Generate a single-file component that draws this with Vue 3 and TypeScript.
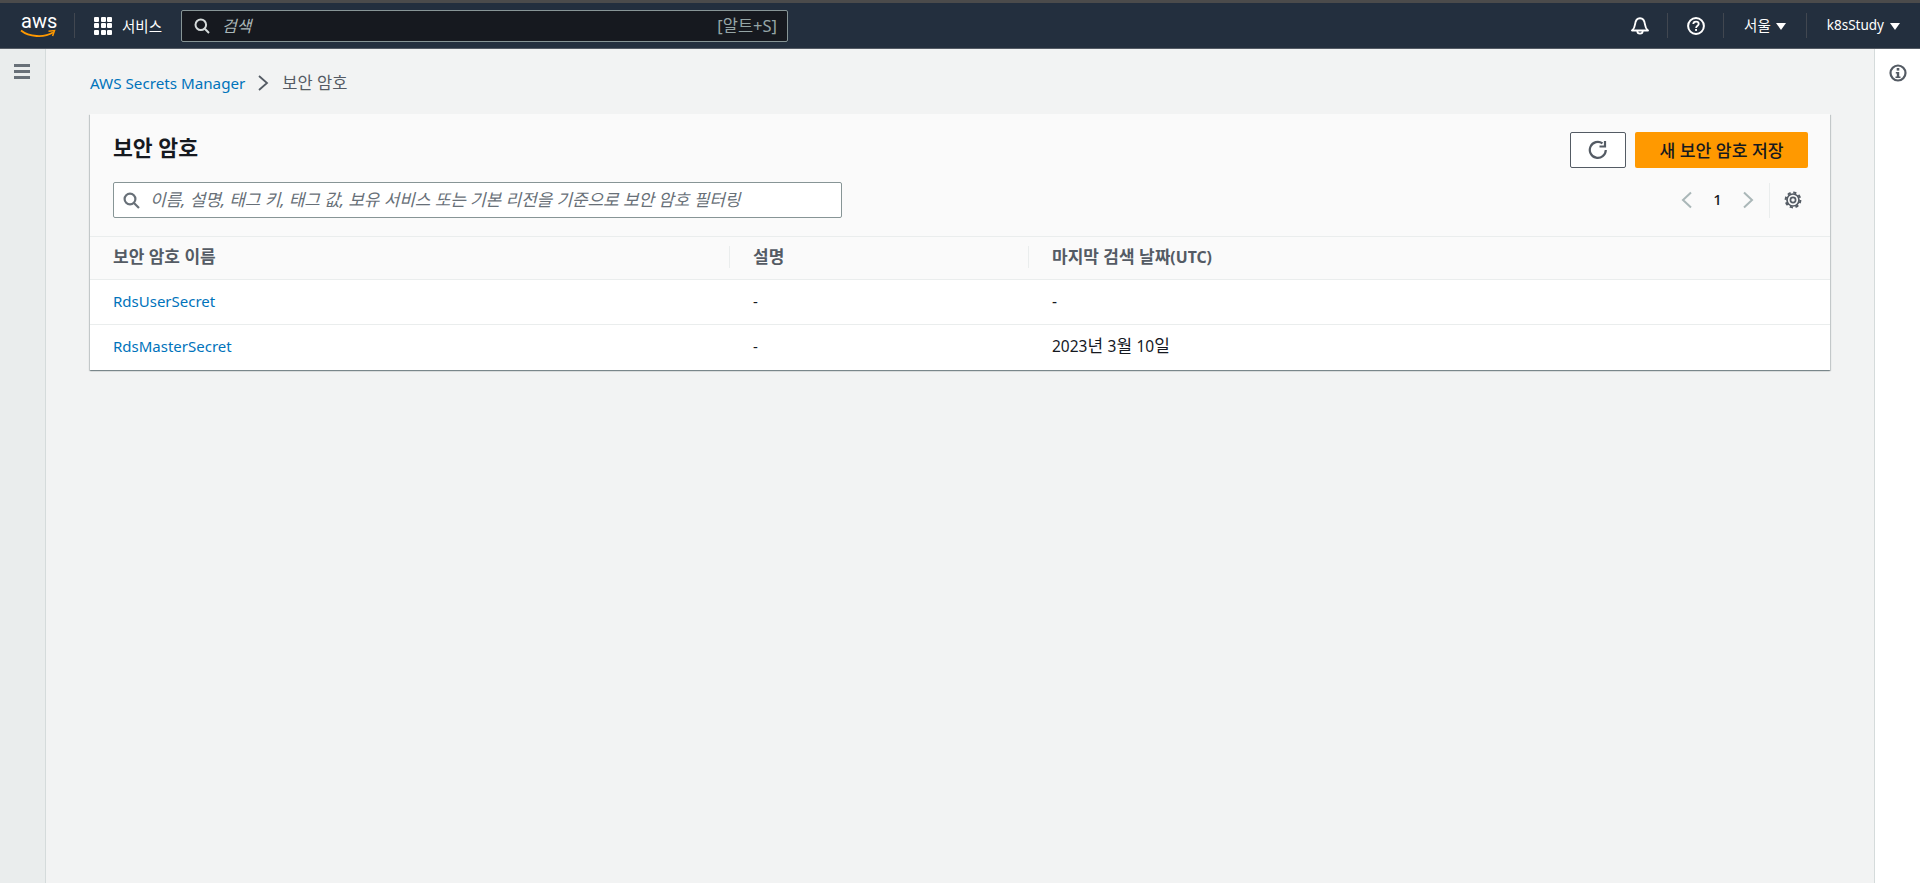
<script setup lang="ts">
interface Part { t: string; ko: boolean }
interface Row { name: string; desc: string; date: Part[] }
const rows: Row[] = [
  { name: 'RdsUserSecret', desc: '-', date: [{ t: '-', ko: false }] },
  {
    name: 'RdsMasterSecret',
    desc: '-',
    date: [
      { t: '2023', ko: false },
      { t: '년 ', ko: true },
      { t: '3', ko: false },
      { t: '월 ', ko: true },
      { t: '10', ko: false },
      { t: '일', ko: true },
    ],
  },
]
</script>

<template>
  <div class="page">
    <header class="nav">
      <div class="logo">
        <span class="logo-text">aws</span>
        <svg class="smile" width="36" height="10" viewBox="0 0 36 10">
          <path d="M1 1.500C9 8 24 9 33 3.500" fill="none" stroke="#f90" stroke-width="1.800" />
          <path d="M28.500 2.200L34.500 1.600L32.600 7" fill="none" stroke="#f90" stroke-width="1.500" />
        </svg>
      </div>
      <span class="nav-sep first"></span>
      <div class="services">
        <span class="grid-icon"><i v-for="n in 9" :key="n"></i></span>
        <span class="services-label">서비스</span>
      </div>
      <div class="global-search">
        <svg width="16" height="16" viewBox="0 0 16 16" class="gs-icon">
          <circle cx="6.800" cy="6.800" r="5.300" fill="none" stroke="#d5dbdb" stroke-width="2" />
          <path d="M10.800 10.800L15 15" stroke="#d5dbdb" stroke-width="2" fill="none" />
        </svg>
        <span class="gs-ph">검색</span>
        <span class="gs-key">[알트+S]</span>
      </div>
      <div class="nav-right">
        <svg class="bell" width="18" height="18" viewBox="0 0 18 18">
          <path d="M1 13.500H17C15 12 14.300 10 14 7.500C13.600 4 12 1.200 9 1.200C6 1.200 4.400 4 4 7.500C3.700 10 3 12 1 13.500Z" fill="none" stroke="#fff" stroke-width="1.900" stroke-linejoin="round" />
          <path d="M6.300 14A2.700 2.700 0 0 0 11.700 14" fill="none" stroke="#fff" stroke-width="1.800" />
        </svg>
        <span class="nav-sep"></span>
        <svg class="help" width="18" height="18" viewBox="0 0 18 18">
          <circle cx="9" cy="9" r="7.900" fill="none" stroke="#fff" stroke-width="2" />
          <path d="M6.300 7.100C6.300 5.500 7.500 4.600 9 4.600C10.600 4.600 11.700 5.600 11.700 6.900C11.700 8.700 9.100 8.900 9.100 11" fill="none" stroke="#fff" stroke-width="1.800" />
          <rect x="8.100" y="12" width="1.900" height="1.900" fill="#fff" />
        </svg>
        <span class="nav-sep"></span>
        <div class="menu region"><span class="menu-ko">서울</span><i class="caret"></i></div>
        <span class="nav-sep"></span>
        <div class="menu user"><span>k8sStudy</span><i class="caret"></i></div>
      </div>
    </header>

    <div class="body">
      <aside class="left">
        <span class="burger"><i></i><i></i><i></i></span>
      </aside>

      <main class="content">
        <nav class="crumbs">
          <a class="link">AWS Secrets Manager</a>
          <svg width="12" height="16" viewBox="0 0 12 16">
            <path d="M2 1L10 8L2 15" fill="none" stroke="#545b64" stroke-width="1.800" />
          </svg>
          <span class="crumb-cur">보안 암호</span>
        </nav>

        <section class="card">
          <div class="card-head">
            <div class="head-row">
              <h1>보안 암호</h1>
              <div class="actions">
                <button class="btn-refresh" type="button">
                  <svg width="20" height="20" viewBox="0 0 20 20">
                    <path d="M17.800 10A8 8 0 1 1 14.500 3.400" fill="none" stroke="#545b64" stroke-width="2.200" />
                    <path d="M17 1V6.500H11.500" fill="none" stroke="#545b64" stroke-width="2.200" />
                  </svg>
                </button>
                <button class="btn-primary" type="button">새 보안 암호 저장</button>
              </div>
            </div>
            <div class="tool-row">
              <div class="filter">
                <svg width="17" height="17" viewBox="0 0 17 17">
                  <circle cx="7" cy="7" r="5.400" fill="none" stroke="#687078" stroke-width="2.200" />
                  <path d="M11 11L16 16" stroke="#687078" stroke-width="2.200" fill="none" />
                </svg>
                <span class="filter-ph">이름, 설명, 태그 키, 태그 값, 보유 서비스 또는 기본 리전을 기준으로 보안 암호 필터링</span>
              </div>
              <div class="pager">
                <svg width="12" height="18" viewBox="0 0 12 18">
                  <path d="M10 1.500L2 9L10 16.500" fill="none" stroke="#aab7b8" stroke-width="2" />
                </svg>
                <span class="page-num">1</span>
                <svg width="12" height="18" viewBox="0 0 12 18">
                  <path d="M2 1.500L10 9L2 16.500" fill="none" stroke="#aab7b8" stroke-width="2" />
                </svg>
                <span class="pager-sep"></span>
                <svg width="18" height="18" viewBox="0 0 18 18">
                  <circle cx="9" cy="9" r="2.600" fill="none" stroke="#545b64" stroke-width="1.700" />
                  <circle cx="9" cy="9" r="6" fill="none" stroke="#545b64" stroke-width="1.700" />
                  <circle cx="9" cy="9" r="7.400" fill="none" stroke="#545b64" stroke-width="2" stroke-dasharray="3.200 2.612" />
                </svg>
              </div>
            </div>
          </div>

          <div class="t-row t-head">
            <div class="c c1 ko">보안 암호 이름</div>
            <div class="c c2 ko"><span class="th-sep"></span>설명</div>
            <div class="c c3"><span class="th-sep"></span><span class="ko">마지막 검색 날짜</span><span class="utc">(UTC)</span></div>
          </div>
          <div v-for="r in rows" :key="r.name" class="t-row t-body">
            <div class="c c1"><a class="link">{{ r.name }}</a></div>
            <div class="c c2">{{ r.desc }}</div>
            <div class="c c3">
              <span v-for="(p, i) in r.date" :key="i" :class="p.ko ? 'ko' : 'num'">{{ p.t }}</span>
            </div>
          </div>
        </section>
      </main>

      <aside class="right">
        <svg width="18" height="18" viewBox="0 0 18 18">
          <circle cx="9" cy="9" r="7.500" fill="none" stroke="#545b64" stroke-width="2.200" />
          <rect x="7.700" y="4" width="2.600" height="2.600" fill="#545b64" />
          <path d="M6.800 8H10.200V12.500H11.500V14H6.500V12.500H7.800V9.500H6.800Z" fill="#545b64" />
        </svg>
      </aside>
    </div>
  </div>
</template>

<style>
html, body { margin: 0; padding: 0; }
</style>

<style scoped>
.page {
  width: 1920px;
  height: 883px;
  overflow: hidden;
  display: flex;
  flex-direction: column;
  background: #f2f3f3;
  font-family: "Noto Sans", "Noto Sans CJK KR", sans-serif;
  font-size: 15px;
  line-height: 20px;
  color: #16191f;
}
.ko { font-size: 17px; }
.num { font-size: 15.500px; }
.utc { font-size: 15.800px; }
.nav {
  height: 45px;
  flex: none;
  display: flex;
  align-items: center;
  background: #232f3e;
  border-top: 3px solid #4b4b4b;
  border-bottom: 1px solid #545b64;
  padding-left: 20px;
  color: #fff;
}
.logo { width: 36px; height: 32px; position: relative; flex: none; }
.logo-text {
  position: absolute;
  left: 1px;
  top: -3px;
  font: 400 20px/28px Roboto, sans-serif;
  color: #fff;
}
.smile { position: absolute; left: 0; top: 19px; }
.nav-sep { width: 1px; height: 25px; background: #414750; flex: none; }
.nav-sep.first { margin-left: 18px; }
.services { display: flex; align-items: center; margin-left: 19px; gap: 10px; }
.grid-icon {
  width: 18px;
  height: 18px;
  display: grid;
  grid-template-columns: repeat(3, 5px);
  grid-auto-rows: 5px;
  gap: 1.500px;
}
.grid-icon i { background: #fff; border-radius: 1px; }
.services-label { font-size: 14.500px; line-height: 18px; }
.global-search {
  width: 607px;
  height: 32px;
  margin-left: 19px;
  box-sizing: border-box;
  border: 1px solid #879596;
  border-radius: 2px;
  background: #16191f;
  display: flex;
  align-items: center;
  padding: 0 10px 0 12px;
}
.gs-icon { flex: none; }
.gs-ph { margin-left: 12px; font-style: italic; color: #aab7b8; font-size: 16px; }
.gs-key { margin-left: auto; color: #95a5a6; font-size: 16.500px; }
.nav-right { margin-left: auto; display: flex; align-items: center; }
.bell { margin-right: 18px; }
.help { margin: 0 18px 0 19px; }
.menu {
  display: flex;
  align-items: center;
  font-size: 13.500px;
  line-height: 18px;
  padding: 0 20px;
  margin-top: -2px;
}
.region { gap: 5px; }
.user { gap: 6px; }
.menu-ko { font-size: 14.500px; }
.caret {
  width: 0;
  height: 0;
  border-left: 5px solid transparent;
  border-right: 5px solid transparent;
  border-top: 7px solid #fff;
  margin-top: 3px;
}
.body { flex: 1; display: flex; min-height: 0; }
.left {
  width: 45px;
  flex: none;
  background: #eaeded;
  border-right: 1px solid #d5dbdb;
  padding-top: 15px;
  display: flex;
  justify-content: center;
  align-items: flex-start;
}
.burger { display: flex; flex-direction: column; gap: 3.500px; width: 16px; margin-left: -1px; }
.burger i { height: 2.500px; background: #687078; }
.content { flex: 1; padding: 24px 44px 0 44px; min-width: 0; }
.crumbs { display: flex; align-items: center; height: 20px; }
.crumbs svg { margin: 0 13px 0 12px; }
.link { color: #0073bb; }
.crumbs .link { font-size: 15.200px; }
.crumb-cur { color: #545b64; font-size: 16.500px; }
.card {
  margin-top: 21px;
  background: #fff;
  box-shadow: 0 1px 1px 0 rgba(0, 28, 36, 0.3), 1px 1px 1px 0 rgba(0, 28, 36, 0.15), -1px 1px 1px 0 rgba(0, 28, 36, 0.15);
}
.card-head {
  background: #fafafa;
  padding: 18px 22px 0 23px;
  height: 123px;
  box-sizing: border-box;
  border-bottom: 1px solid #eaeded;
}
.head-row { display: flex; justify-content: space-between; align-items: flex-start; }
h1 { margin: 1px 0 0; font-size: 21.600px; font-weight: 700; line-height: 30px; }
.actions { display: flex; gap: 9px; }
.btn-refresh {
  width: 56px;
  height: 36px;
  box-sizing: border-box;
  background: #fff;
  border: 1px solid #545b64;
  border-radius: 2px;
  padding: 0;
  display: flex;
  align-items: center;
  justify-content: center;
}
.btn-primary {
  width: 173px;
  height: 36px;
  background: #ff9900;
  border: 0;
  border-radius: 2px;
  padding: 0 0 2px;
  font-family: inherit;
  font-size: 17.200px;
  font-weight: 500;
  color: #16191f;
}
.tool-row { display: flex; justify-content: space-between; align-items: center; margin-top: 14px; }
.filter {
  width: 729px;
  height: 36px;
  box-sizing: border-box;
  border: 1px solid #879596;
  border-radius: 2px;
  background: #fff;
  display: flex;
  align-items: center;
  padding-left: 9px;
}
.filter-ph { margin: -1px 0 0 10px; font-style: italic; color: #687078; font-size: 17px; letter-spacing: -0.100px; }
.pager { display: flex; align-items: center; height: 36px; margin-right: 6px; }
.page-num { margin: -2px 20px 0; font-weight: 500; width: 9px; text-align: center; }
.pager-sep { width: 1px; height: 35px; background: #eaeded; margin: 0 14px 0 15px; }
.t-row { display: grid; grid-template-columns: 639px 299px 1fr; align-items: center; }
.t-head {
  height: 43px;
  background: #fafafa;
  border-bottom: 1px solid #eaeded;
  box-sizing: border-box;
  color: #545b64;
  font-weight: 700;
}
.t-head .c { margin-top: -2px; }
.t-body { height: 45px; border-bottom: 1px solid #eaeded; box-sizing: border-box; }
.t-body .c { margin-top: -2px; }
.t-body:last-child .c { margin-top: -3px; }
.c { position: relative; }
.c1 { padding-left: 23px; }
.c2 { padding-left: 24px; }
.c3 { padding-left: 24px; }
.th-sep {
  position: absolute;
  left: 0;
  top: 50%;
  transform: translateY(-50%);
  width: 1px;
  height: 22px;
  background: #eaeded;
}
.t-body:last-child { border-bottom: 0; }
.right {
  width: 45px;
  flex: none;
  background: #fff;
  border-left: 1px solid #d5dbdb;
  padding-top: 15px;
  display: flex;
  justify-content: center;
  align-items: flex-start;
}
</style>
